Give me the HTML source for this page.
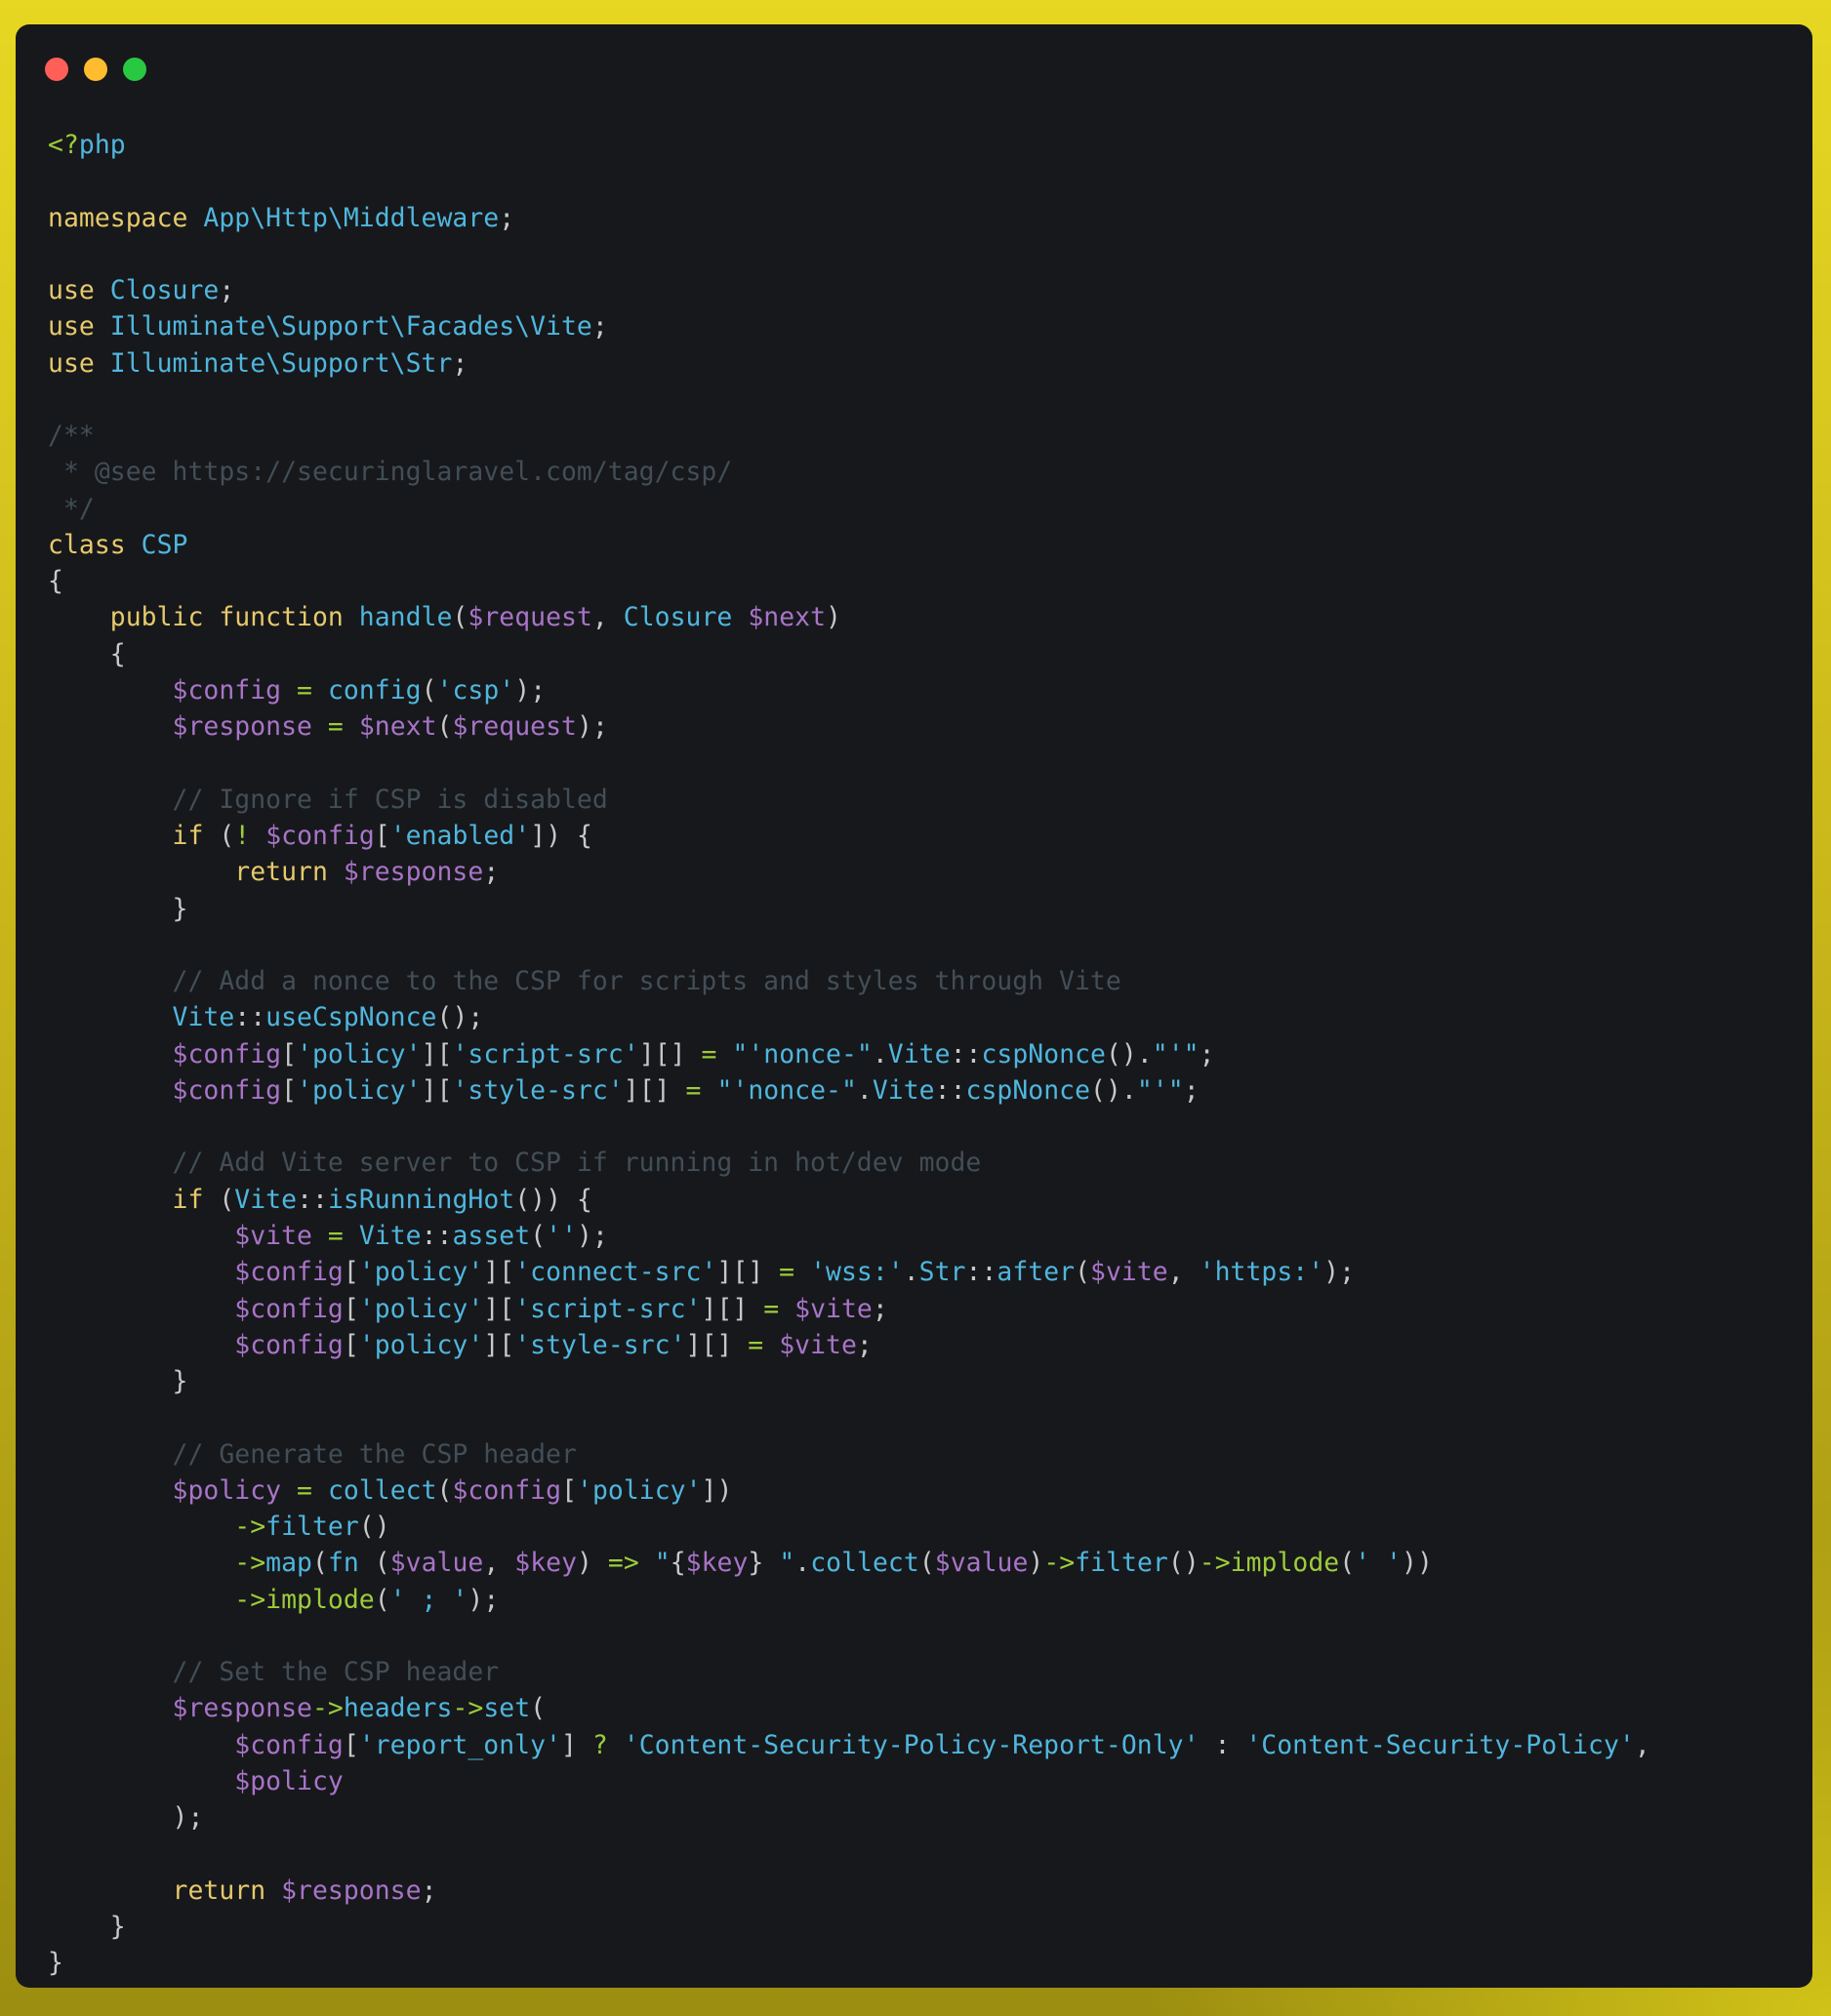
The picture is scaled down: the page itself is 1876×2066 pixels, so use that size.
<!DOCTYPE html>
<html><head><meta charset="utf-8"><style>
html,body{margin:0;padding:0}
body{width:1876px;height:2066px;overflow:hidden;position:relative;
background:radial-gradient(ellipse 700px 500px at 100% 100%,rgba(215,200,25,.9),rgba(215,200,25,0)),linear-gradient(180deg,#e6d722 0%,#c9b61a 45%,#9c8e10 100%);}
.card{position:absolute;left:16px;top:25px;width:1841px;height:2012px;background:#17181b;border-radius:14px;}
.dot{position:absolute;top:59px;width:24px;height:24px;border-radius:50%}
pre{position:absolute;left:49px;top:130px;margin:0;font-family:"DejaVu Sans Mono","Liberation Mono",monospace;font-size:26.4px;line-height:37.27px;color:#c8c8c8;letter-spacing:0.05px}
.k{color:#e6c96c}.c{color:#4fb6de}.v{color:#a874c8}.o{color:#9ccc3c}.m{color:#424e57}
</style></head><body>
<div class="card"></div>
<div class="dot" style="left:46px;background:#ff5f57"></div>
<div class="dot" style="left:86px;background:#febc2e"></div>
<div class="dot" style="left:126px;background:#28c840"></div>
<pre><span class="o">&lt;?</span><span class="c">php</span>

<span class="k">namespace</span> <span class="c">App\Http\Middleware</span>;

<span class="k">use</span> <span class="c">Closure</span>;
<span class="k">use</span> <span class="c">Illuminate\Support\Facades\Vite</span>;
<span class="k">use</span> <span class="c">Illuminate\Support\Str</span>;

<span class="m">/**
 * @see https://securinglaravel.com/tag/csp/
 */</span>
<span class="k">class</span> <span class="c">CSP</span>
{
    <span class="k">public function</span> <span class="c">handle</span>(<span class="v">$request</span>, <span class="c">Closure</span> <span class="v">$next</span>)
    {
        <span class="v">$config</span> <span class="o">=</span> <span class="c">config</span>(<span class="c">'csp'</span>);
        <span class="v">$response</span> <span class="o">=</span> <span class="v">$next</span>(<span class="v">$request</span>);

        <span class="m">// Ignore if CSP is disabled</span>
        <span class="k">if</span> (<span class="o">!</span> <span class="v">$config</span>[<span class="c">'enabled'</span>]) {
            <span class="k">return</span> <span class="v">$response</span>;
        }

        <span class="m">// Add a nonce to the CSP for scripts and styles through Vite</span>
        <span class="c">Vite</span>::<span class="c">useCspNonce</span>();
        <span class="v">$config</span>[<span class="c">'policy'</span>][<span class="c">'script-src'</span>][] <span class="o">=</span> <span class="c">"'nonce-"</span>.<span class="c">Vite</span>::<span class="c">cspNonce</span>().<span class="c">"'"</span>;
        <span class="v">$config</span>[<span class="c">'policy'</span>][<span class="c">'style-src'</span>][] <span class="o">=</span> <span class="c">"'nonce-"</span>.<span class="c">Vite</span>::<span class="c">cspNonce</span>().<span class="c">"'"</span>;

        <span class="m">// Add Vite server to CSP if running in hot/dev mode</span>
        <span class="k">if</span> (<span class="c">Vite</span>::<span class="c">isRunningHot</span>()) {
            <span class="v">$vite</span> <span class="o">=</span> <span class="c">Vite</span>::<span class="c">asset</span>(<span class="c">''</span>);
            <span class="v">$config</span>[<span class="c">'policy'</span>][<span class="c">'connect-src'</span>][] <span class="o">=</span> <span class="c">'wss:'</span>.<span class="c">Str</span>::<span class="c">after</span>(<span class="v">$vite</span>, <span class="c">'https:'</span>);
            <span class="v">$config</span>[<span class="c">'policy'</span>][<span class="c">'script-src'</span>][] <span class="o">=</span> <span class="v">$vite</span>;
            <span class="v">$config</span>[<span class="c">'policy'</span>][<span class="c">'style-src'</span>][] <span class="o">=</span> <span class="v">$vite</span>;
        }

        <span class="m">// Generate the CSP header</span>
        <span class="v">$policy</span> <span class="o">=</span> <span class="c">collect</span>(<span class="v">$config</span>[<span class="c">'policy'</span>])
            <span class="o">-&gt;</span><span class="c">filter</span>()
            <span class="o">-&gt;</span><span class="c">map</span>(<span class="c">fn</span> (<span class="v">$value</span>, <span class="v">$key</span>) <span class="o">=&gt;</span> <span class="c">"</span>{<span class="v">$key</span>}<span class="c"> "</span>.<span class="c">collect</span>(<span class="v">$value</span>)<span class="o">-&gt;</span><span class="c">filter</span>()<span class="o">-&gt;implode</span>(<span class="c">' '</span>))
            <span class="o">-&gt;implode</span>(<span class="c">' ; '</span>);

        <span class="m">// Set the CSP header</span>
        <span class="v">$response</span><span class="o">-&gt;</span><span class="c">headers</span><span class="o">-&gt;</span><span class="c">set</span>(
            <span class="v">$config</span>[<span class="c">'report_only'</span>] <span class="o">?</span> <span class="c">'Content-Security-Policy-Report-Only'</span> : <span class="c">'Content-Security-Policy'</span>,
            <span class="v">$policy</span>
        );

        <span class="k">return</span> <span class="v">$response</span>;
    }
}</pre>
</body></html>
